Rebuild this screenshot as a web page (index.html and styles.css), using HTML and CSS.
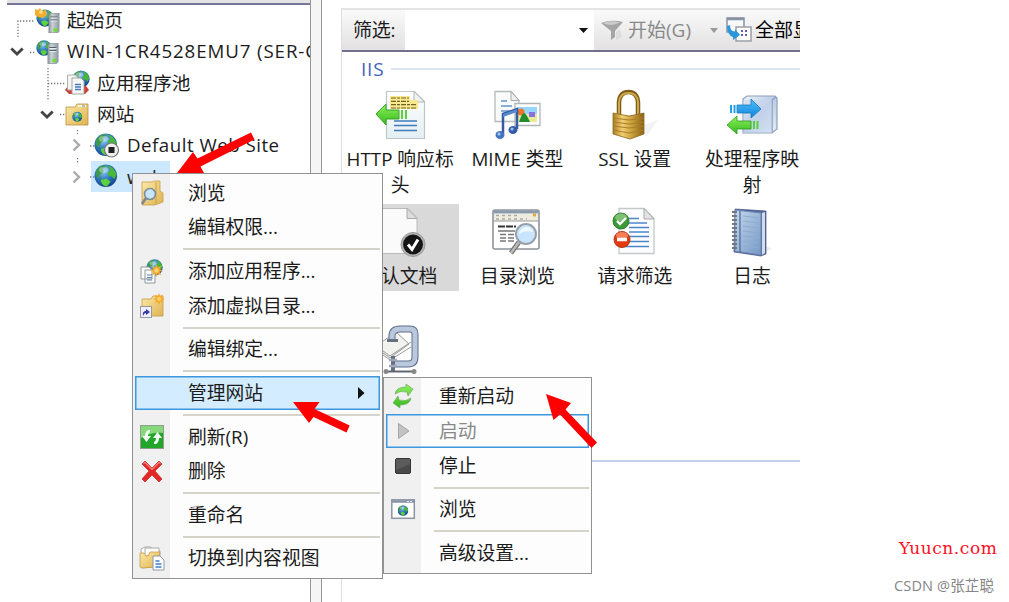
FILE: index.html
```html
<!DOCTYPE html>
<html lang="zh-CN">
<head>
<meta charset="utf-8">
<title>IIS</title>
<link rel="stylesheet" href="styles.css">
</head>
<body>
<svg class="defs" width="0" height="0">
  <defs>
    <radialGradient id="sea" cx=".4" cy=".3" r=".75"><stop offset="0" stop-color="#8ccdf0"/><stop offset=".5" stop-color="#2f78bd"/><stop offset="1" stop-color="#143f86"/></radialGradient>
    <linearGradient id="srv" x2="1"><stop offset="0" stop-color="#7f8c92"/><stop offset=".35" stop-color="#c9d2d6"/><stop offset="1" stop-color="#8b979d"/></linearGradient>
    <linearGradient id="fold" x2="1" y2="1"><stop offset="0" stop-color="#fbe9a8"/><stop offset="1" stop-color="#dfb250"/></linearGradient>
    <linearGradient id="page" x2="0" y2="1"><stop offset="0" stop-color="#fff"/><stop offset="1" stop-color="#e3eff3"/></linearGradient>
    <linearGradient id="grn" x2="0" y2="1"><stop offset="0" stop-color="#8df25c"/><stop offset="1" stop-color="#35b81c"/></linearGradient>
    <linearGradient id="blu" x2="0" y2="1"><stop offset="0" stop-color="#4fc0ff"/><stop offset="1" stop-color="#1283d8"/></linearGradient>
    <linearGradient id="gold" x2="1"><stop offset="0" stop-color="#a77d20"/><stop offset=".3" stop-color="#f2cf70"/><stop offset=".65" stop-color="#c59a35"/><stop offset="1" stop-color="#8a6315"/></linearGradient>
    <linearGradient id="box" x2="1" y2="1"><stop offset="0" stop-color="#eef3fa"/><stop offset=".5" stop-color="#b9cbe6"/><stop offset="1" stop-color="#e6eef8"/></linearGradient>
    <linearGradient id="note" x2="1" y2="1"><stop offset="0" stop-color="#c4d8ed"/><stop offset="1" stop-color="#7398c4"/></linearGradient>
    <symbol id="globe" viewBox="0 0 24 24">
      <circle cx="12" cy="12" r="11.5" fill="url(#sea)"/>
      <path d="M2.500 6Q6 1.500 11 1l1 2-3 2 1 3-4 3-1 4Q1 13 2.500 6z" fill="#3c9a4b"/>
      <path d="M14 1.500q7 2 9 9l-2 5-3-3-3 0-1-4 3-2z" fill="#48b83a"/>
      <path d="M7 16l6-1 4 3-4 5q-6-1-6-7z" fill="#5cd23e"/>
      <ellipse cx="10" cy="6" rx="5" ry="3" fill="#fff" opacity=".35"/>
    </symbol>
    <symbol id="server" viewBox="0 0 11 20">
      <path d="M0 2l2-2h9v18l-2 2H0z" fill="url(#srv)" stroke="#74828a" stroke-width=".6"/>
      <path d="M2 4h7M2 7h7" stroke="#55636a" stroke-width="1"/><path d="M2 5h7M2 8h7" stroke="#f1f5f6" stroke-width=".8"/>
      <rect x="5" y="15.500" width="3.500" height="3" fill="#6fe21f"/>
    </symbol>
    <symbol id="star" viewBox="0 0 12 12"><path d="M6 0l1.200 3.200L10.500 1.500 8.800 4.800 12 6 8.800 7.200l1.700 3.300-3.300-1.700L6 12 4.800 8.800 1.500 10.500 3.200 7.200 0 6l3.200-1.200L1.500 1.500l3.300 1.700z" fill="#f8a82c"/><circle cx="6" cy="6" r="2" fill="#ffd36b"/></symbol>
  </defs>
</svg>

<div class="window">
  <aside class="tree">
    <svg class="tree-lines" width="120" height="200" viewBox="0 0 120 200"><path d="M18 37V21h17M30 52.500h5M48 68v32M48 83.500h18M60 114.500h5M77.500 130v4M77.500 158v5M90 146h5M90 177h5" fill="none" stroke="#777" stroke-width="1.300" stroke-dasharray="1.300 1.700"/></svg>
    <div class="node level-0"><span class="toggle"></span>
      <svg class="node-icon" viewBox="0 0 27 27"><use href="#globe" x="2" y="2" width="18" height="18"/><path d="M1 2l3 1 2-2 2 3 4-1 1 5-4 3-5-1-3-2z" fill="#f4ad31"/><circle cx="7" cy="5" r="2" fill="#ffd97f"/><use href="#server" x="14.500" y="6" width="11" height="20"/></svg>
      <span class="node-text">起始页</span></div>
    <div class="node level-0"><span class="toggle"><svg width="14" height="9" viewBox="0 0 14 9"><path d="M1.300 1.500L7 7l5.700-5.500" fill="none" stroke="#444" stroke-width="2.800"/></svg></span>
      <svg class="node-icon" viewBox="0 0 27 27"><use href="#globe" x="2" y="2" width="16" height="16"/><use href="#server" x="13.500" y="4.500" width="11" height="22"/></svg>
      <span class="node-text host">WIN-1CR4528EMU7 (SER-C</span></div>
    <div class="node level-1"><span class="toggle"></span>
      <svg class="node-icon" viewBox="0 0 27 27"><use href="#globe" x="8" y="1" width="18" height="18"/><path d="M1 21l3-4h18l3 4-4 4H5z" fill="#ce4038"/><path d="M3.500 6h8l3 3v12h-11z" fill="#f4f4f2" stroke="#a4a7a6" stroke-width=".9"/><path d="M8 9h9l3 3v13H8z" fill="#f7f7f5" stroke="#9a9d9c" stroke-width=".9"/><path d="M11 15.500h6M11 18h6M11 20.500h6" stroke="#487bbd" stroke-width="1.300"/></svg>
      <span class="node-text">应用程序池</span></div>
    <div class="node level-1"><span class="toggle"><svg width="14" height="9" viewBox="0 0 14 9"><path d="M1.300 1.500L7 7l5.700-5.500" fill="none" stroke="#444" stroke-width="2.800"/></svg></span>
      <svg class="node-icon" viewBox="0 0 27 27"><path d="M2 6h9l2-3h11v21H2z" fill="url(#fold)" stroke="#b99344" stroke-width=".8"/><path d="M14 5h8" stroke="#fff4cc" stroke-width="2"/><path d="M18 5h3" stroke="#5da7d2" stroke-width="1.200"/><use href="#globe" x="8" y="10.500" width="10.500" height="10.500"/></svg>
      <span class="node-text">网站</span></div>
    <div class="node level-2"><span class="toggle"><svg width="9" height="14" viewBox="0 0 9 14"><path d="M1.500 1.500L7 7l-5.500 5.500" fill="none" stroke="#aaa" stroke-width="2.400"/></svg></span>
      <svg class="node-icon" viewBox="0 0 27 27"><use href="#globe" x="1" y="1" width="23.500" height="23.500"/><circle cx="18.500" cy="18" r="7" fill="#eee" stroke="#777" stroke-width="1.200"/><rect x="15.500" y="15" width="6" height="6" fill="#222"/></svg>
      <span class="node-text site">Default Web Site</span></div>
    <div class="node level-2 selected"><span class="toggle"><svg width="9" height="14" viewBox="0 0 9 14"><path d="M1.500 1.500L7 7l-5.500 5.500" fill="none" stroke="#aaa" stroke-width="2.400"/></svg></span>
      <svg class="node-icon" viewBox="0 0 27 27"><use href="#globe" x="1" y="1" width="23.500" height="23.500"/></svg>
      <span class="node-text">web</span></div>
  </aside>
  <div class="splitter"></div>
  <main class="features">
    <div class="toolbar">
      <span class="filter-label">筛选:</span>
      <span class="combo"><svg width="10" height="5" viewBox="0 0 10 5"><path d="M0 0h9L4.500 5z" fill="#111"/></svg></span>
      <span class="actions">
        <svg class="funnel" width="22" height="22" viewBox="0 0 22 22"><path d="M0 4Q10 0 22 3L14 12v6l-4 3V12z" fill="#a5a5a5"/><path d="M2 4Q10 1 19 3.500 10 8 2 4z" fill="#cbcbcb"/><path d="M15 13l4-3 2 8-6 3z" fill="#dcdcdc"/></svg>
        <span class="go">开始(G)</span>
        <svg class="drop" width="9" height="5" viewBox="0 0 9 5"><path d="M0 0h8L4 5z" fill="#999"/></svg>
        <svg class="show-icon" width="26" height="26" viewBox="0 0 26 26"><path d="M1 1h17v14H1z" fill="#f7f9fb" stroke="#8793a4" stroke-width="1.500"/><path d="M1 2h17" stroke="#8793a4" stroke-width="2.500"/><path d="M10 10h15v14H10z" fill="#fff" stroke="#9aa0a8" stroke-width="1.500"/><path d="M15 14h2M19 14h2M15 18h2M19 18h2" stroke="#6262b5" stroke-width="2"/><path d="M1 9l3-1q0 6 5 7v-3l5 6-7 5v-3Q1 18 1 9z" fill="#2c97d8"/></svg>
        <span class="show">全部显</span>
      </span>
    </div>
    <div class="group-head"><span>IIS</span><i></i></div>
    <div class="grid">
      <div class="feature"><svg viewBox="0 0 52 52"><path d="M12.500 2.500h28l10 10v37h-38z" fill="url(#page)" stroke="#bfc6c8" stroke-width="1.200"/><path d="M40 2.500v10.500h10.500z" fill="#f2f2f2" stroke="#b0b5b7"/><path d="M16 7h20v4h8v9H16z" fill="#fae98c"/><path d="M17 9h18M17 12.300h18M17 15.600h25M17 19h25" stroke="#6e6529" stroke-width="1.200" stroke-dasharray="5 1 3 1"/><path d="M20 32h23M20 36.500h23M20 41.500h23" stroke="#3e7cbc" stroke-width="1.600"/><path d="M2 25l10-10v6h13v9H12v6z" fill="url(#grn)" stroke="#2f9f20" stroke-width=".9"/><path d="M28 21v9M32 21v9" stroke="#56d637" stroke-width="2"/></svg><span>HTTP 响应标头</span></div>
      <div class="feature"><svg viewBox="0 0 52 52"><path d="M4 2.500h16l8 9v21H4z" fill="#fafbfb" stroke="#b5babd" stroke-width="1.300"/><path d="M20 2.500v9h8z" fill="#eee" stroke="#aaa"/><path d="M10 12h6M10 17h11M10 22h9" stroke="#6197cd" stroke-width="1.400"/><path d="M24 14.500h25v22H24z" fill="#fff" stroke="#b0b5b8" stroke-width="1.300"/><path d="M27 18h19v15H27z" fill="#96d7ff"/><path d="M27 25h19v8H27z" fill="#e7eb9a"/><circle cx="30" cy="23" r="3.500" fill="#ef7527"/><path d="M28 33q3-9 5-9t6 9z" fill="#238c2f"/><path d="M38 23h6v5h-6z" fill="#8a6fe0"/><path d="M12 45V25l14-5v20" fill="none" stroke="#355ba3" stroke-width="2.500"/><path d="M12 25l14-5v3l-14 5z" fill="#5689d1"/><ellipse cx="9" cy="46" rx="4.500" ry="4" fill="#4674bd"/><ellipse cx="22" cy="41" rx="4.500" ry="4" fill="#315ca9"/><circle cx="8" cy="45" r="1.500" fill="#a6ccf3"/><circle cx="21" cy="40" r="1.500" fill="#9dc3ed"/></svg><span>MIME 类型</span></div>
      <div class="feature"><svg viewBox="0 0 52 52"><path d="M34 36l15-5-12 17z" fill="#f3f3f3"/><path d="M10 27V13Q11 3 19.500 3T29 13v14" fill="none" stroke="#7d5d18" stroke-width="4.500"/><path d="M10 26V13Q11 4 19.500 4T29 13v13" fill="none" stroke="#cda74c" stroke-width="2"/><path d="M4 24l16 3 15-3v21l-14 5-17-5z" fill="url(#gold)" stroke="#8c6820" stroke-width=".8"/><path d="M4 29l16 2 15-2M4 33l16 2 15-2M4 37l16 2 15-2M4 41l16 3 15-3" stroke="#a87d2c" stroke-width="1" fill="none"/></svg><span>SSL 设置</span></div>
      <div class="feature"><svg viewBox="0 0 52 52"><path d="M17 10l4-3h28l2 2v31l-5 4H17z" fill="url(#box)" stroke="#8c9fb8" stroke-width="1.200"/><path d="M46 11l4-3M46 11v33" stroke="#91a3bd" stroke-width="1.500"/><path d="M17 11h29v33H17z" fill="#c9d8ee" opacity=".5"/><path d="M11 16h14v-6l10 10-10 9v-5H11z" fill="url(#blu)" stroke="#1478b8" stroke-width=".8"/><path d="M5 16v8M8.500 16v8" stroke="#279fe9" stroke-width="2"/><path d="M1 36l10-9v5h14v8H11v5z" fill="url(#grn)" stroke="#2b9b1d" stroke-width=".8"/><path d="M28 32v8M31.500 32v8" stroke="#55d138" stroke-width="2"/></svg><span>处理程序映射</span></div>
      <div class="feature active"><svg viewBox="0 0 52 52"><path d="M3 2.500h31l9 9v36H3z" fill="#fafafa" stroke="#bbb"/><path d="M33 2.500v10h10z" fill="#ddd" stroke="#aaa"/><circle cx="39" cy="38.500" r="12" fill="#b4b4b4" stroke="#999"/><circle cx="39" cy="38.500" r="10" fill="#151515"/><path d="M34 38.500l4 5 6-10" fill="none" stroke="#fff" stroke-width="3"/></svg><span>默认文档</span></div>
      <div class="feature"><svg viewBox="0 0 52 52"><rect x="2" y="4" width="46" height="39" rx="2" fill="#fff" stroke="#8c949b" stroke-width="1.600"/><path d="M3 6h44" stroke="#8999ab" stroke-width="3"/><path d="M3 8h44v7H3z" fill="#eeeddd"/><path d="M5 9.500h23M5 13h31" stroke="#aaa" stroke-width="1.400" stroke-dasharray="3 3"/><path d="M3 15h44" stroke="#999"/><path d="M42 9h3" stroke="#e7a834" stroke-width="3"/><path d="M7 20.500h18" stroke="#333" stroke-width="2" stroke-dasharray="7 1"/><path d="M7 25h17M9 28.500h6M17 28.500h6M9 32h6M17 32h6M9 35h6M17 35h6" stroke="#777" stroke-width="1.300"/><path d="M28 36l-8 11" stroke="#777" stroke-width="5"/><path d="M28 36l-8 11" stroke="#bbb" stroke-width="2.500"/><circle cx="35" cy="28" r="10" fill="#c9e4ff" stroke="#9aa0a9" stroke-width="2"/><path d="M28 28q1-7 8-7 5 0 6 5-8-2-14 2z" fill="#eef8ff"/></svg><span>目录浏览</span></div>
      <div class="feature"><svg viewBox="0 0 52 52"><path d="M10 2.500h25l10 10v35H10z" fill="#fcfdfd" stroke="#c4c8ca" stroke-width="1.300"/><path d="M35 2.500v10.500h10z" fill="#e3e3e3" stroke="#aaa"/><path d="M20 12.500h10M20 17h18M20 21.500h20M20 26h20M20 30.500h20M20 35.500h20M16 40.500h24" stroke="#4d86cb" stroke-width="1.500"/><circle cx="12" cy="15" r="8" fill="#3c9a36" stroke="#347b30"/><ellipse cx="12" cy="11.500" rx="6" ry="4" fill="#8fcb83" opacity=".8"/><path d="M8 15l3 3 6-6" fill="none" stroke="#fff" stroke-width="2.300"/><circle cx="13" cy="33.500" r="8" fill="#e33a12" stroke="#b03519"/><ellipse cx="13" cy="29.500" rx="6" ry="3.500" fill="#ff9c72" opacity=".7"/><path d="M8 33.500h10" stroke="#fff" stroke-width="3.500"/></svg><span>请求筛选</span></div>
      <div class="feature"><svg viewBox="0 0 52 52"><path d="M36 40l10 2-8 6z" fill="#eee"/><path d="M9 3l31 2v43l-5 2-27-4z" fill="#54699d" stroke="#425687" stroke-width=".7"/><path d="M36 7l3-1v41l-3 2z" fill="#d4dbea"/><path d="M9 4l26 3v42L9 45z" fill="url(#note)" stroke="#6d86b3"/><path d="M14 5v41" stroke="#536da1" stroke-width="1.300"/><path d="M17 10l16 2M17 15l16 2M17 20l16 2M17 25l16 2M17 30l16 2M17 35l16 2M17 40l16 2" stroke="#8facd0"/><path d="M6 6h5M6 10h5M6 14h5M6 18h5M6 22h5M6 26h5M6 30h5M6 34h5M6 38h5M6 42h5" stroke="#727780" stroke-width="2"/></svg><span>日志</span></div>
      <div class="feature zip"><svg viewBox="0 0 52 52"><path d="M5 20L22 8l13 12-19 14-11-8z" fill="#f2f2ef" stroke="#999"/><path d="M5 24l11 8 21-14M5 28l11 8 21-13" fill="none" stroke="#999"/><path d="M18 15v-3q0-7 8-7h10q5 0 5 5v23q0 7-7 7H20" fill="none" stroke="#5f6f88" stroke-width="7"/><path d="M18 15v-3q0-7 8-7h10q5 0 5 5v23q0 7-7 7H20" fill="none" stroke="#b9c8dd" stroke-width="5"/><path d="M13 16.500h11" stroke="#66707f" stroke-width="3"/><path d="M19 32v15" stroke="#67707c" stroke-width="4"/><path d="M15 36h8M15 42h8" stroke="#9ca8ba" stroke-width="2.500"/><path d="M12 47.500h28" stroke="#5e6672" stroke-width="2"/><circle cx="12" cy="47.500" r="2.500" fill="#888"/><circle cx="40" cy="47.500" r="2.500" fill="#888"/></svg></div>
    </div>
    <div class="group-end"></div>
  </main>

  <div class="menu main-menu">
    <div class="item"><svg viewBox="0 0 26 26"><path d="M3 2h10l2-1h6v10l3 2v9l-8 3H3z" fill="url(#fold)" stroke="#c9a04a" stroke-width=".8"/><path d="M17 2v22" stroke="#caa348"/><circle cx="11" cy="14" r="5.500" fill="#c7e5f7" stroke="#7c8d99" stroke-width="1.600"/><path d="M7 18l-4 6" stroke="#808790" stroke-width="2.600"/></svg><span>浏览</span></div>
    <div class="item"><span>编辑权限...</span></div>
    <hr>
    <div class="item"><svg viewBox="0 0 26 26"><use href="#globe" x="7" y="1" width="17" height="17"/><path d="M2 9h8l3 3v9H2zM6 12h8l2 3v10H6z" fill="#fbfbfb" stroke="#929899"/><path d="M8 17h5M8 19.500h5M8 22h5" stroke="#5484be" stroke-width="1.200"/><use href="#star" x="11" y="6" width="13" height="13"/></svg><span>添加应用程序...</span></div>
    <div class="item"><svg viewBox="0 0 26 26"><path d="M3 6h9l2-3h10v20H3z" fill="url(#fold)" stroke="#c69a42" stroke-width=".8"/><use href="#star" x="14" y="0" width="12" height="12"/><rect x="1.500" y="13.500" width="11" height="11" fill="#eef" stroke="#999"/><path d="M4 23q-1-5 3-5v-2l4 3-4 3v-2q-2 0-3 3z" fill="#343aa6"/></svg><span>添加虚拟目录...</span></div>
    <hr>
    <div class="item"><span>编辑绑定...</span></div>
    <hr>
    <div class="item hot"><span>管理网站</span><svg class="sub" viewBox="0 0 7 12"><path d="M0 0l6.500 6L0 12z" fill="#111"/></svg></div>
    <hr>
    <div class="item"><svg viewBox="0 0 26 26"><rect x="1.500" y="1.500" width="23" height="23" fill="#22a52a" stroke="#8ba18b"/><path d="M2 2h22v7Q12 8 2 14z" fill="#87d77b"/><path d="M11 6H9q-3 2-3 6H3l4.500 6 4.500-6H9q0-3 2-4zM15 20h2q3-2 3-6h3l-4.500-6-4.500 6h3q0 3-2 4z" fill="#f4fff3"/></svg><span>刷新(R)</span></div>
    <div class="item"><svg viewBox="0 0 26 26"><path d="M3 6l3-3 7 7 7-7 3 3-7 7 7 8-3 3-7-7-7 7-3-3 7-8z" fill="#e32626" stroke="#c4282c" stroke-width=".7"/><path d="M4.500 5.500l1.500-1 7 7 7-7 1.500 1" fill="none" stroke="#f78680" stroke-width="1.200"/></svg><span>删除</span></div>
    <hr>
    <div class="item"><span>重命名</span></div>
    <hr>
    <div class="item"><svg viewBox="0 0 26 26"><path d="M2 4l4-2h6v4h9v15l-18 2z" fill="#fff" stroke="#aaa"/><path d="M6 3h14v8H6z" fill="#fff" stroke="#aaa"/><path d="M1 22V8h4l2 3h2l2-4h10l-3 15-15 1z" fill="url(#fold)" stroke="#c69c47" stroke-width=".8"/><path d="M14 11h7l4 4v10H14z" fill="#fcfdff" stroke="#919ba5"/><path d="M16.500 16h4M16.500 19h6M16.500 22h6" stroke="#3f7fc6" stroke-width="1.400"/></svg><span>切换到内容视图</span></div>
  </div>

  <div class="menu sub-menu">
    <div class="item"><svg viewBox="0 0 26 26"><path d="M5 11q1-7 11-7V1l7 5-5 7-1-4Q10 7 5 11zM21 15q-1 7-11 7v3l-7-5 5-7 1 4q7 2 12-2z" fill="url(#grn)" stroke="#72a967" stroke-width=".7"/></svg><span>重新启动</span></div>
    <div class="item framed"><svg viewBox="0 0 26 26"><path d="M8.500 5.500L19 13 8.500 20.500z" fill="#c2c2c2" stroke="#a5a5a5"/></svg><span>启动</span></div>
    <div class="item"><svg viewBox="0 0 26 26"><rect x="5.500" y="5.500" width="15" height="15" rx="1.500" fill="#494949" stroke="#333"/><path d="M6 6h14v5L6 17z" fill="#5c5c5c"/></svg><span>停止</span></div>
    <hr>
    <div class="item"><svg viewBox="0 0 26 26"><rect x="1.800" y="3.800" width="22.500" height="18.500" fill="#fff" stroke="#8c96a4" stroke-width="1.500"/><path d="M2 5.500h22" stroke="#8693a7" stroke-width="2.500"/><path d="M17 5.500h5" stroke="#dde5ef" stroke-width="1.200" stroke-dasharray="2 1"/><use href="#globe" x="7.500" y="9" width="11" height="11"/></svg><span>浏览</span></div>
    <hr>
    <div class="item"><span>高级设置...</span></div>
  </div>

  <svg class="arrows" width="800" height="602" viewBox="0 0 800 602"><g fill="#f00"><path d="M177 173L193 152 197.500 158.500 251 132.500 254.500 139.500 200.500 166.500 204 173z"/><path d="M293 402H319.500L314.500 409 349.700 425.500 346.500 432.500 313.500 417 309 423z"/><path d="M546 394L571 403 565.500 409.500 597 442.500 591.500 448 560 414.500 553.500 420z"/></g></svg>
</div>
<footer class="marks"><span class="site-mark">Yuucn.com</span><span class="author">CSDN @张芷聪</span></footer>
</body>
</html>
```
FILE: styles.css
```css
* { box-sizing: border-box; }
body {
  margin: 0; width: 1009px; height: 602px; overflow: hidden; background: #fff;
  display: flex; justify-content: space-between;
  font: 19px/26px "Open Sans", "Noto Sans CJK SC", sans-serif; color: #1b1b1b;
}
.defs, .tree-lines, .arrows { position: absolute; }
.window { position: relative; width: 800px; height: 602px; overflow: hidden; display: flex; }

.tree { width: 310px; height: 602px; padding-top: 4.5px; overflow: hidden; flex: none; position: relative;
  background: linear-gradient(#e4e4e4 0 3px, #77779a 3px 5px, transparent 5px) 7px 0 no-repeat; }
.tree-lines { left: 0; top: 0; }
.node { height: 31.3px; display: flex; align-items: center; white-space: nowrap; }
.level-0 { padding-left: 7px; }
.level-1 { padding-left: 37px; }
.level-2 { padding-left: 66px; }
.toggle { width: 20px; height: 20px; margin-right: 7px; display: flex; align-items: center; justify-content: center; flex: none; }
.node-icon { width: 27px; height: 27px; margin-right: 6px; flex: none; }
.node-text { font-size: 18.7px; flex: none; }
.host { letter-spacing: .9px; }
.site { letter-spacing: .5px; }
.level-2 .node-text { margin-left: 1px; }
.selected { background: linear-gradient(#cce8ff, #cce8ff) 91px 0 / 79px 100% no-repeat; }

.splitter { width: 12px; flex: none; background: #f5f5f5; border: solid #969696; border-width: 0 1.500px; }

.features { flex: none; width: 459px; margin: 8px 0 0 19px; border-left: 1px solid #ddd; }
.toolbar { height: 44px; display: flex; border-top: 2px solid #e4e4e4; border-bottom: 2px solid #71718f; }
.filter-label, .actions { background: linear-gradient(#fafafa, #e3e1e2); }
.filter-label { width: 63px; padding: 7px 0 0 11px; letter-spacing: -.2px; }
.combo { width: 189px; display: flex; align-items: center; justify-content: flex-end; padding-right: 5px; }
.actions { width: 206px; display: flex; align-items: center; padding-left: 7px; white-space: nowrap; overflow: hidden; }
.actions > * { flex: none; }
.go { width: 82px; margin-left: 5px; color: #888; }
.drop { margin-right: 7px; }
.show { margin-left: 3px; color: #000; }
.group-head { height: 33px; display: flex; align-items: center; padding-left: 19px; color: #3f62bd; }
.group-head span { width: 30px; letter-spacing: .8px; }
.group-head i { flex: 1; height: 2px; background: #dce5f5; }
.grid { display: grid; grid-template-columns: repeat(4, 117.3px); grid-auto-rows: 117.5px; height: 375px; }
.feature { display: flex; flex-direction: column; align-items: center; padding: 3.500px 2px 0 1px; }
.feature svg { width: 52px; height: 52px; margin-bottom: 5px; flex: none; }
.feature span { width: 112px; text-align: center; font-size: 18.800px; line-height: 26.500px; }
.active { background: #d9d9d9; width: 116.5px; height: 87px; margin-top: 1px; }
.active svg { margin-top: -1px; }
.group-end { height: 2px; background: #c4d0ea; }

.menu { position: absolute; z-index: 2; border: 1.500px solid #929292; background: linear-gradient(90deg, #f0f0f0 37px, #fdfdfd 37px); padding: 1px 2px; }
.main-menu { left: 132px; top: 173px; width: 251px; height: 406px; padding-top: 1.500px; }
.sub-menu { left: 383px; top: 377px; width: 209px; height: 197px; padding-top: 1px; }
.item { height: 34.640px; display: grid; grid-template-columns: 53px 1fr auto; align-items: center; }
.item > svg { width: 26px; height: 26px; margin-left: 4px; grid-column: 1; grid-row: 1; }
.item > span { grid-column: 2; grid-row: 1; white-space: nowrap; font-size: 18.800px; }
.item > .sub { grid-column: 3; width: 7px; height: 12px; margin-right: 15px; }
.menu hr { height: 2px; margin: 3.500px 0 3.500px 48px; border: 0; background: #d5d3ca; }
.hot, .framed { box-shadow: inset 0 0 0 1.500px #3c97df; }
.hot { background: #d3ecff; }
.framed span { color: #888; }
.sub-menu .item { height: 34.700px; }
.arrows { z-index: 3; left: 0; top: 0; }

.marks { width: 116px; padding-top: 536px; display: flex; flex-direction: column; }
.site-mark { margin-left: 6px; color: #ff1025; font: 17px/24px "DejaVu Serif", serif; letter-spacing: .55px; }
.author { margin-left: 1px; margin-top: 14px; font-size: 14.500px; line-height: 24px; letter-spacing: .15px; color: #858585; white-space: nowrap; }
```
